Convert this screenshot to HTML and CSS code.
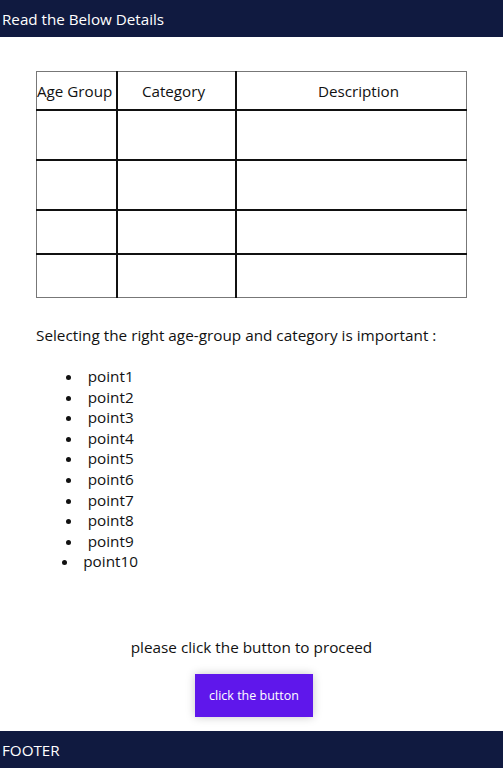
FILE: index.html
```html
<!DOCTYPE html>
<html>
<head>
<meta charset="utf-8">
<link rel="stylesheet" href="styles.css">
</head>
<body>
<header class="topbar">Read the Below Details</header>
<main class="content">
  <table class="info-table">
    <thead>
      <tr><th class="c1">Age Group</th><th class="c2">Category</th><th class="c3">Description</th></tr>
    </thead>
    <tbody>
      <tr class="r1"><td></td><td></td><td></td></tr>
      <tr class="r2"><td></td><td></td><td></td></tr>
      <tr class="r3"><td></td><td></td><td></td></tr>
      <tr class="r4"><td></td><td></td><td></td></tr>
    </tbody>
  </table>
  <p class="lead">Selecting the right age-group and category is important :</p>
  <ul class="points">
    <li>point1</li>
    <li>point2</li>
    <li>point3</li>
    <li>point4</li>
    <li>point5</li>
    <li>point6</li>
    <li>point7</li>
    <li>point8</li>
    <li>point9</li>
    <li>point10</li>
  </ul>
  <section class="proceed">
    <p class="proceed-text">please click the button to proceed</p>
    <button class="btn">click the button</button>
  </section>
</main>
<footer class="footbar">FOOTER</footer>
</body>
</html>
```
FILE: styles.css
```css
html, body {
  margin: 0;
  padding: 0;
}
body {
  font-family: "Open Sans", "Noto Sans", sans-serif;
  color: #111;
  background: #fff;
  width: 503px;
  height: 768px;
  display: flex;
  flex-direction: column;
}
.topbar {
  background: #101a40;
  color: #fff;
  height: 37px;
  box-sizing: border-box;
  padding: 9px 0 0 2px;
  font-size: 15.2px;
  line-height: 20px;
}
.content {
  flex: 1;
  padding: 34px 36px 0 36px;
}
.info-table {
  width: 431px;
  border-collapse: collapse;
  border: 1px solid #777;
}
.info-table th,
.info-table td {
  border: 2px solid #111;
  padding: 0;
  font-weight: normal;
  font-size: 15.2px;
}
.info-table th {
  height: 37px;
}
.info-table tr > :first-child { border-left: 1px solid #777; }
.info-table tr > :last-child { border-right: 1px solid #777; }
.info-table tbody tr:last-child td { border-bottom: 1px solid #777; }
.info-table thead th { border-top: 1px solid #777; }
.c1 { width: 79px; text-align: left; }
th.c2 { width: 111px; padding-right: 6px; }
th.c3 { padding-left: 14px; }
.r1 td, .r2 td { height: 48px; }
.r3 td { height: 42px; }
.r4 td { height: 42px; }
.lead {
  margin: 26px 0 0 0;
  font-size: 15.3px;
  line-height: 22px;
}
.points {
  margin: 20px 0 0 0;
  padding: 0;
  width: 128px;
  list-style-position: inside;
  text-align: center;
  font-size: 15.3px;
  line-height: 20.6px;
}
.proceed {
  margin-top: 64px;
  display: flex;
  flex-direction: column;
  align-items: center;
}
.proceed-text {
  margin: 0;
  font-size: 15.3px;
  line-height: 22px;
}
.btn {
  margin: 16px 0 0 5px;
  width: 118px;
  height: 43px;
  border: none;
  background: #5f17eb;
  color: #fff;
  font-family: "Open Sans", "Noto Sans", sans-serif;
  font-size: 12.5px;
  box-shadow: 0 0 9px rgba(0,0,0,0.22);
}
.footbar {
  background: #101a40;
  color: #fff;
  height: 37px;
  box-sizing: border-box;
  padding: 9px 0 0 2px;
  font-size: 15.2px;
  line-height: 20px;
}
```
